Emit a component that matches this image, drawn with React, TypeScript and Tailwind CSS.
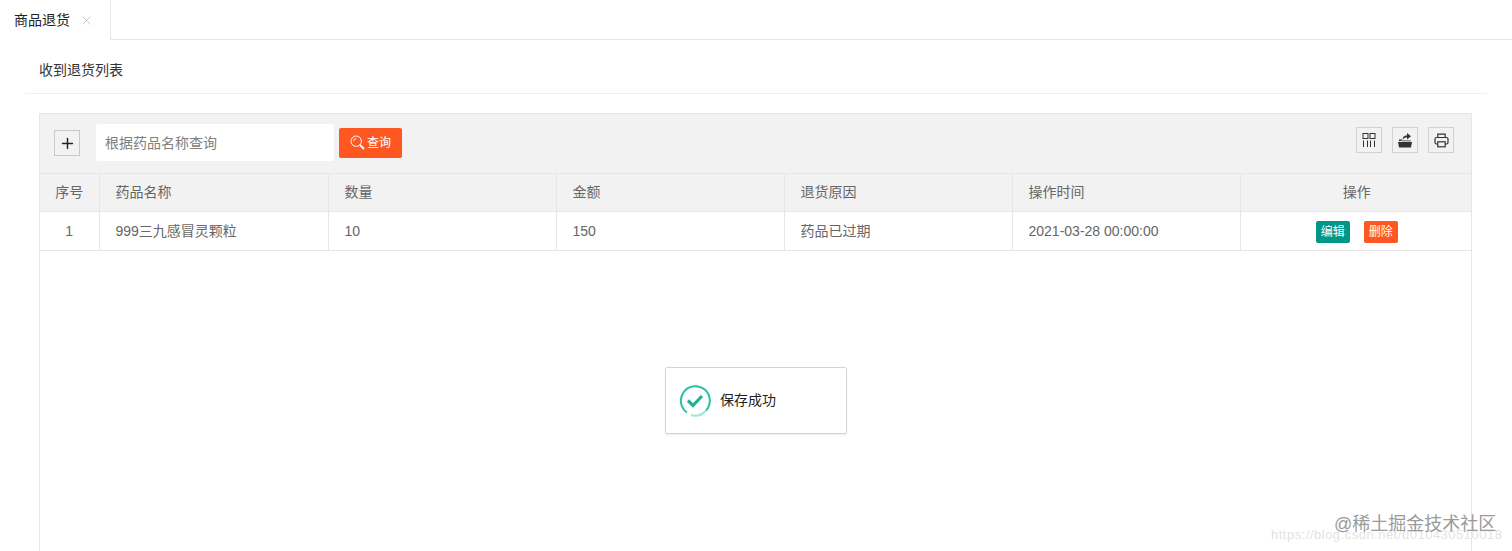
import React from "react";
import { Plus, X } from "lucide-react";

const columns = [
  { title: "序号", width: "w-[59px]", center: true },
  { title: "药品名称", width: "w-[229px]" },
  { title: "数量", width: "w-[228px]" },
  { title: "金额", width: "w-[228px]" },
  { title: "退货原因", width: "w-[228px]" },
  { title: "操作时间", width: "w-[228px]" },
  { title: "操作", width: "w-[231px]", center: true },
];

const row = ["1", "999三九感冒灵颗粒", "10", "150", "药品已过期", "2021-03-28 00:00:00"];

const IconButton = ({ children }: { children: React.ReactNode }) => (
  <button className="flex h-[26px] w-[26px] items-center justify-center border border-[#d2d2d2] text-[#333]">
    {children}
  </button>
);

const App: React.FC = () => {
  return (
    <div
      className="relative h-[551px] w-[1512px] overflow-hidden bg-white text-[14px] text-[#666]"
      style={{ fontFamily: '"Liberation Sans", "Noto Sans CJK SC", sans-serif' }}
    >
      {/* Tabs */}
      <div className="flex h-10 border-b border-[#e6e6e6]">
        <div className="flex h-10 w-[111px] items-center border-r border-[#e6e6e6] bg-white pl-[14px]">
          <span className="text-[14px] text-[#222]">商品退货</span>
          <X className="ml-[9px] text-[#c2c2c2]" size={15} strokeWidth={1.3} />
        </div>
      </div>

      {/* Title */}
      <div className="mx-[25px] flex h-[54px] items-center border-b border-[#f0f0f0] pl-[14px] pt-[8px] text-[14px] text-[#333]">
        收到退货列表
      </div>

      {/* Table */}
      <div className="ml-[39px] mt-[19px] h-[500px] w-[1433px] border border-[#e6e6e6]">
        <div className="flex h-[59px] items-center bg-[#f2f2f2] pl-[14px] pr-[17px]">
          <button className="mb-[1px] flex h-[26px] w-[26px] items-center justify-center border border-[#c9c9c9] text-[#222]">
            <Plus size={17} strokeWidth={2} />
          </button>
          <div className="mb-[2px] ml-[16px] flex h-[37px] w-[238px] items-center rounded-[2px] bg-white pl-[9px] pt-[1px] text-[14px] text-[#808080]">
            根据药品名称查询
          </div>
          <button className="mb-[2px] ml-[5px] flex h-[30px] w-[63px] items-center justify-center rounded-[2px] bg-[#ff5722] text-[12px] text-white">
            <svg width="15" height="15" viewBox="0 0 15 15" fill="none" stroke="#fff" strokeWidth="1">
              <circle cx="6.2" cy="6.2" r="5.2" />
              <path d="M3.6 6.2a2.6 2.6 0 0 1 2.6-2.6" />
              <path d="M10 10l4 4" strokeWidth="1.8" />
            </svg>
            <span className="ml-[2px]">查询</span>
          </button>
          <div className="mb-[7px] ml-auto flex gap-[10px]">
            <IconButton>
              <svg width="14" height="14" viewBox="0 0 14 14" fill="none" stroke="#333" strokeWidth="1">
                <rect x="1" y="0.5" width="5" height="5" />
                <rect x="8" y="0.5" width="5" height="5" />
                <path d="M1.5 7.5v6.5M5.5 7.5v6.5M8.5 7.5v6.5M12.5 7.5v6.5" />
              </svg>
            </IconButton>
            <IconButton>
              <svg width="16" height="16" viewBox="0 0 16 16" fill="#333">
                <path d="M1 10h14l-1 5.500H2z" />
                <path d="M2 9.300V7.500h3v1.800h9v-.8H6z" />
                <path d="M5.500 8c0-3 1.800-4.500 4.500-4.700V1l4 3.200-4 3.200V5.200C8 5.300 6.600 6.200 5.500 8z" />
              </svg>
            </IconButton>
            <IconButton>
              <svg width="15" height="15" viewBox="0 0 15 15" fill="none" stroke="#333" strokeWidth="1.2">
                <path d="M3.8 4.500V1.200h7.400v3.300" />
                <rect x="1" y="4.500" width="13" height="6.500" rx="1.500" />
                <rect x="3.800" y="8.800" width="7.400" height="5" fill="#f2f2f2" />
              </svg>
            </IconButton>
          </div>
        </div>

        <table className="w-[1431px] table-fixed border-collapse">
          <thead>
            <tr className="h-[38px] border-y border-[#e6e6e6] bg-[#f2f2f2]">
              {columns.map((col, i) => (
                <th
                  key={col.title}
                  className={`${col.width} ${col.center ? "text-center" : "pl-[16px] text-left"} ${
                    i < columns.length - 1 ? "border-r border-[#e6e6e6]" : "pl-[2px]"
                  } p-0 text-[14px] font-normal text-[#666]`}
                >
                  {col.title}
                </th>
              ))}
            </tr>
          </thead>
          <tbody>
            <tr className="h-[39px] border-b border-[#e6e6e6]">
              {row.map((cell, i) => (
                <td
                  key={cell}
                  className={`${i === 0 ? "text-center" : "pl-[16px]"} border-r border-[#e6e6e6] p-0 text-[14px] text-[#666]`}
                >
                  {cell}
                </td>
              ))}
              <td className="p-0">
                <div className="mt-[1px] flex items-center justify-center gap-[14px] pl-[2px]">
                  <span className="flex h-[22px] w-[34px] items-center justify-center rounded-[2px] bg-[#009688] text-[12px] text-white">
                    编辑
                  </span>
                  <span className="flex h-[22px] w-[34px] items-center justify-center rounded-[2px] bg-[#ff5722] text-[12px] text-white">
                    删除
                  </span>
                </div>
              </td>
            </tr>
          </tbody>
        </table>
      </div>

      {/* Toast */}
      <div className="absolute left-[665px] top-[367px] flex h-[67px] w-[182px] items-center rounded-[2px] border border-[#d4d4d4] bg-white pl-[13px] shadow-[0_1px_2px_rgba(0,0,0,0.08)]">
        <svg width="32" height="32" viewBox="0 0 32 32" fill="none">
          <path d="M8 27.500A14.500 14.500 0 1 1 27 25.500" stroke="#26c2a2" strokeWidth="2" />
          <path d="M27 25.500A14.500 14.500 0 0 1 12 30" stroke="#a5e3d5" strokeWidth="2" />
          <path d="M9 15.500l5 5 9-9.500" stroke="#1db394" strokeWidth="3.200" />
        </svg>
        <span className="ml-[9px] text-[14px] text-[#222]">保存成功</span>
      </div>

      {/* Watermarks */}
      <div className="absolute left-[1271px] top-[527px] text-[13px] leading-4 tracking-[0.5px] text-[#e3e3e3]">
        https://blog.csdn.net/u010430510018
      </div>
      <div className="absolute left-[1334px] top-[513px] text-[18px] leading-[22px] text-[#9a9a9a]">
        @稀土掘金技术社区
      </div>
    </div>
  );
};

export default App;
